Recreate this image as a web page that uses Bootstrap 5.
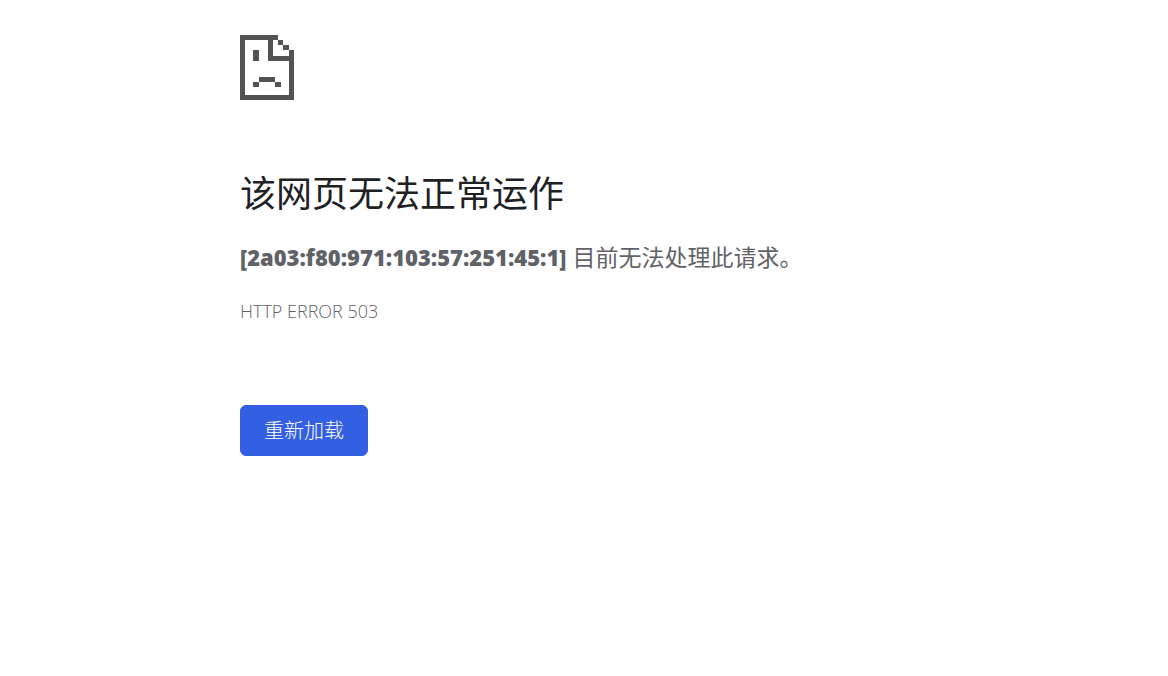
<!DOCTYPE html>
<html lang="zh-CN">
<head>
<meta charset="utf-8">
<meta name="viewport" content="width=device-width, initial-scale=1">
<title>该网页无法正常运作</title>
<link href="https://cdn.jsdelivr.net/npm/bootstrap@5.3.0/dist/css/bootstrap.min.css" rel="stylesheet">
<style>
  body { font-family: "Open Sans", "Noto Sans CJK SC", sans-serif; color: #5f6368; background: #fff; }
  .error-page { max-width: 720px; padding: 35px 16px 24px; }
  .error-icon { width: 54px; height: 65px; fill: #535353; margin-bottom: 68px; }
  .error-title { font-size: 36px; line-height: 52px; font-weight: 400; color: #202124; margin-bottom: 23px; }
  .error-summary { font-size: 23px; line-height: 28px; margin-bottom: 28px; }
  .error-summary strong { font-size: 22px; font-weight: 800; }
  .error-code { font-size: 18px; line-height: 24px; font-weight: 300; margin-bottom: 82px; }
  .btn-reload { --bs-btn-bg: #3360e2; --bs-btn-border-color: #3360e2; --bs-btn-border-radius: 6px; --bs-btn-padding-x: 23px; --bs-btn-padding-y: 10px; --bs-btn-font-size: 20px; --bs-btn-font-weight: 300; --bs-btn-line-height: 29px; }
</style>
</head>
<body>
<main class="error-page container">
  <svg class="error-icon d-block" viewBox="0 0 162 195" shape-rendering="crispEdges" aria-hidden="true">
    <path fill-rule="evenodd" d="M0 0H114V15H99V63H147V45H162V195H0ZM15 15V180H147V78H84V15Z"/>
    <path d="M114 15h16v15h-16zM130 30h17v15h-17zM40 45h16v33h-16zM57 126h48v15h-48zM40 141h17v16h-17zM105 141h17v16h-17z"/>
  </svg>
  <h1 class="error-title">该网页无法正常运作</h1>
  <p class="error-summary"><strong>[2a03:f80:971:103:57:251:45:1]</strong> 目前无法处理此请求。</p>
  <p class="error-code">HTTP ERROR 503</p>
  <button type="button" class="btn btn-primary btn-reload">重新加载</button>
</main>
<script src="https://cdn.jsdelivr.net/npm/bootstrap@5.3.0/dist/js/bootstrap.bundle.min.js"></script>
</body>
</html>
